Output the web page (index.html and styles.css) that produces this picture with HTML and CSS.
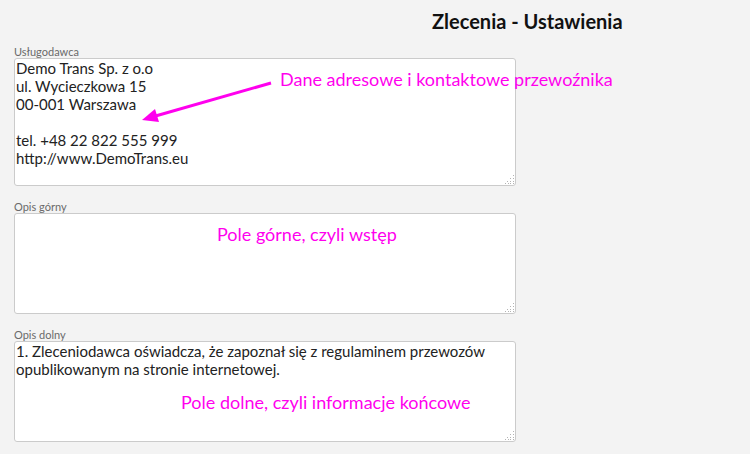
FILE: index.html
```html
<!DOCTYPE html>
<html lang="pl">
<head>
  <meta charset="UTF-8" />
  <meta name="viewport" content="width=device-width, initial-scale=1" />
  <title>Zlecenia - Ustawienia</title>
  <link rel="stylesheet" href="styles.css">
</head>
<body>
  <div class="page">
    <h1 class="title">Zlecenia - Ustawienia</h1>

    <div class="field">
      <label for="provider">Usługodawca</label>
      <div class="box box-tall">
        <textarea id="provider">Demo Trans Sp. z o.o
ul. Wycieczkowa 15
00-001 Warszawa

tel. +48 22 822 555 999
http://www.DemoTrans.eu</textarea>
        <svg class="grip" width="10" height="10" viewBox="0 0 10 10">
          <rect x="8" y="0" width="1" height="1" />
          <rect x="5" y="3" width="1" height="1" /><rect x="8" y="3" width="1" height="1" />
          <rect x="2" y="6" width="1" height="1" /><rect x="5" y="6" width="1" height="1" /><rect x="8" y="6" width="1" height="1" />
          <rect x="0" y="8" width="1" height="1" /><rect x="3" y="8" width="1" height="1" /><rect x="5" y="8" width="1" height="1" /><rect x="8" y="8" width="1" height="1" />
        </svg>
      </div>
    </div>

    <div class="field">
      <label for="topText">Opis górny</label>
      <div class="box">
        <textarea id="topText"></textarea>
        <svg class="grip" width="10" height="10" viewBox="0 0 10 10">
          <rect x="8" y="0" width="1" height="1" />
          <rect x="5" y="3" width="1" height="1" /><rect x="8" y="3" width="1" height="1" />
          <rect x="2" y="6" width="1" height="1" /><rect x="5" y="6" width="1" height="1" /><rect x="8" y="6" width="1" height="1" />
          <rect x="0" y="8" width="1" height="1" /><rect x="3" y="8" width="1" height="1" /><rect x="5" y="8" width="1" height="1" /><rect x="8" y="8" width="1" height="1" />
        </svg>
      </div>
    </div>

    <div class="field">
      <label for="bottomText">Opis dolny</label>
      <div class="box">
        <textarea id="bottomText">1. Zleceniodawca oświadcza, że zapoznał się z regulaminem przewozów opublikowanym na stronie internetowej.</textarea>
        <svg class="grip" width="10" height="10" viewBox="0 0 10 10">
          <rect x="8" y="0" width="1" height="1" />
          <rect x="5" y="3" width="1" height="1" /><rect x="8" y="3" width="1" height="1" />
          <rect x="2" y="6" width="1" height="1" /><rect x="5" y="6" width="1" height="1" /><rect x="8" y="6" width="1" height="1" />
          <rect x="0" y="8" width="1" height="1" /><rect x="3" y="8" width="1" height="1" /><rect x="5" y="8" width="1" height="1" /><rect x="8" y="8" width="1" height="1" />
        </svg>
      </div>
    </div>

    <!-- annotations drawn over the form -->
    <span class="note note-provider">Dane adresowe i kontaktowe przewoźnika</span>
    <svg class="arrow" width="300" height="140" viewBox="0 0 300 140">
      <line x1="271" y1="83" x2="152" y2="117" />
      <polygon points="142,120 155,109 159,122" />
    </svg>
    <span class="note note-top">Pole górne, czyli wstęp</span>
    <span class="note note-bottom">Pole dolne, czyli informacje końcowe</span>
  </div>
</body>
</html>
```

FILE: styles.css
```css
* {
  box-sizing: border-box;
  margin: 0;
  padding: 0;
}
body {
  background-color: #f3f3f3;
  font-family: Lato, "Liberation Sans", sans-serif;
  color: #222;
}
.page {
  position: relative;
  padding: 0 14px;
  width: 750px;
  height: 454px;
  overflow: hidden;
}
.title {
  margin: 9px 0 0 418px;
  font-size: 20px;
  line-height: 24px;
  font-weight: 700;
  color: #111;
  height: 37px;
}
.field {
  width: 502px;
  margin-bottom: 15px;
}
.field label {
  display: block;
  font-size: 11px;
  line-height: 12px;
  color: #6a6a6a;
}
.box {
  position: relative;
  height: 101px;
}
.box-tall {
  height: 128px;
}
.box textarea {
  display: block;
  width: 100%;
  height: 100%;
  resize: none;
  border: 1px solid #cbcbcb;
  border-radius: 3px;
  background-color: #fff;
  padding: 0 1px;
  font-family: Lato, "Liberation Sans", sans-serif;
  font-size: 15px;
  line-height: 18px;
  color: #222;
  overflow: hidden;
}
.grip {
  position: absolute;
  right: 1px;
  bottom: 1px;
  fill: #b4b4b4;
}
.note {
  position: absolute;
  font-family: Lato, "Noto Sans", sans-serif;
  font-size: 18px;
  line-height: 22px;
  color: #ff00ee;
  white-space: nowrap;
}
.note-provider {
  left: 280px;
  top: 68px;
}
.note-top {
  left: 217px;
  top: 223px;
}
.note-bottom {
  left: 181px;
  top: 391px;
}
.arrow {
  position: absolute;
  left: 0;
  top: 0;
}
.arrow line {
  stroke: #ff00ee;
  stroke-width: 3;
}
.arrow polygon {
  fill: #ff00ee;
}
```
